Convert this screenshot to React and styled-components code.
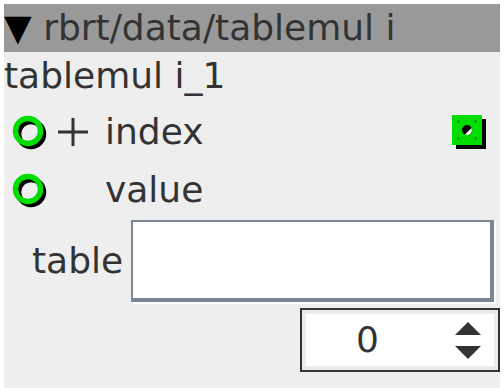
import React from "react";
import styled, { createGlobalStyle } from "styled-components";

const GlobalStyle = createGlobalStyle`
    html, body {
        margin: 0;
        padding: 0;
        background: #ffffff;
    }
    #root {
        padding: 4px;
    }
`;

const Panel = styled.div`
    width: 496px;
    height: 384px;
    background: #eeeeee;
    font-family: "DejaVu Sans", "Liberation Sans", sans-serif;
    font-size: 36px;
    color: #333333;
    display: flex;
    flex-direction: column;
    overflow: hidden;
`;

const Header = styled.div`
    height: 48px;
    line-height: 48px;
    background: #999999;
    white-space: nowrap;
`;

const Arrow = styled.span`
    color: #000000;
`;

const Title = styled.div`
    height: 48px;
    line-height: 48px;
    white-space: nowrap;
`;

const Ports = styled.div`
    padding-top: 3px;
`;

const PortRow = styled.div`
    height: 58px;
    display: flex;
    align-items: center;
    padding-left: 7px;
    padding-right: 13px;
`;

const PortLabel = styled.span`
    line-height: 42px;
`;

const PlusBox = styled.div`
    width: 40px;
    height: 30px;
    margin-left: 10px;
    margin-right: 8px;
    display: flex;
    align-items: center;
`;

const Spacer = styled.div`
    flex: 1;
`;

const TableRow = styled.div`
    display: flex;
    align-items: center;
    padding-left: 28px;
    padding-right: 6px;
    margin-top: 1px;
`;

const TableLabel = styled.span`
    line-height: 42px;
    margin-right: 8px;
`;

const TableInput = styled.div`
    flex: 1;
    height: 76px;
    background: #ffffff;
    border-style: solid;
    border-color: #7b8794;
    border-width: 2px 4px 4px 2px;
    box-shadow: 2px 2px 0 #ffffff;
`;

const SpinRow = styled.div`
    display: flex;
    justify-content: flex-end;
    margin-top: 6px;
`;

const SpinBox = styled.div`
    width: 196px;
    height: 60px;
    border: 2px solid #333333;
    display: flex;
    align-items: center;
    background: #ffffff;
    box-shadow: inset 0 0 0 4px #ececec;
`;

const SpinValue = styled.span`
    flex: 1;
    text-align: center;
    line-height: 42px;
    padding-right: 22px;
`;

const SpinArrows = styled.div`
    width: 26px;
    margin-right: 17px;
    display: flex;
    flex-direction: column;
    gap: 11px;
`;

const Port = () => (
    <svg width="36" height="36" viewBox="0 0 36 36">
        <circle cx="20" cy="20" r="12.5" fill="none" stroke="#000" strokeWidth="5.5" />
        <circle cx="17" cy="17" r="12.5" fill="none" stroke="#00dd00" strokeWidth="5.5" />
    </svg>
);

const Plus = () => (
    <svg width="32" height="30" viewBox="0 0 32 30">
        <path d="M1 15 H31 M16 1 V29" stroke="#333" strokeWidth="3" />
    </svg>
);

const SquarePort = () => (
    <svg width="36" height="36" viewBox="0 0 36 36">
        <rect x="5" y="5" width="30" height="30" fill="#000" />
        <rect x="1" y="1" width="30" height="30" fill="#00dd00" />
        <path
            d="M7 9 V7 H9 M23 7 H25 V9 M25 23 V25 H23 M9 25 H7 V23"
            stroke="#0a7a0a"
            strokeWidth="1.2"
            fill="none"
        />
        <circle cx="16" cy="16" r="5" fill="#000" />
        <path d="M20.5 14 A5 5 0 0 1 14 20.5 Z" fill="#fff" />
    </svg>
);

const Triangles = () => (
    <>
        <svg width="26" height="13" viewBox="0 0 26 13">
            <path d="M13 0 L26 13 H0 Z" fill="#333" />
        </svg>
        <svg width="26" height="13" viewBox="0 0 26 13">
            <path d="M0 0 H26 L13 13 Z" fill="#333" />
        </svg>
    </>
);

function App() {
    return (
        <>
            <GlobalStyle />
            <Panel>
                <Header>
                    <Arrow>▼</Arrow> rbrt/data/tablemul i
                </Header>
                <Title>tablemul i_1</Title>
                <Ports>
                    <PortRow>
                        <Port />
                        <PlusBox>
                            <Plus />
                        </PlusBox>
                        <PortLabel>index</PortLabel>
                        <Spacer />
                        <SquarePort />
                    </PortRow>
                    <PortRow>
                        <Port />
                        <PlusBox />
                        <PortLabel>value</PortLabel>
                    </PortRow>
                </Ports>
                <TableRow>
                    <TableLabel>table</TableLabel>
                    <TableInput />
                </TableRow>
                <SpinRow>
                    <SpinBox>
                        <SpinValue>0</SpinValue>
                        <SpinArrows>
                            <Triangles />
                        </SpinArrows>
                    </SpinBox>
                </SpinRow>
            </Panel>
        </>
    );
}

export default App;
